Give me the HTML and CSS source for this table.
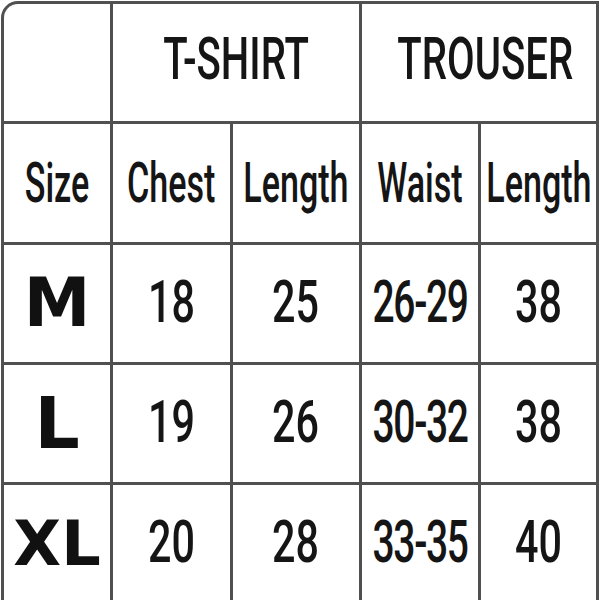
FILE: index.html
```html
<!DOCTYPE html>
<html>
<head>
<meta charset="utf-8">
<link rel="stylesheet" href="styles.css">
</head>
<body>
<div class="chart">
  <div class="cell corner"></div>
  <div class="cell group span2"><span class="t head">T-SHIRT</span></div>
  <div class="cell group span2 shift"><span class="t head">TROUSER</span></div>

  <div class="cell"><span class="t lab">Size</span></div>
  <div class="cell"><span class="t lab">Chest</span></div>
  <div class="cell"><span class="t lab">Length</span></div>
  <div class="cell"><span class="t lab">Waist</span></div>
  <div class="cell"><span class="t lab">Length</span></div>

  <div class="cell"><span class="size m">M</span></div>
  <div class="cell"><span class="t num">18</span></div>
  <div class="cell"><span class="t num">25</span></div>
  <div class="cell"><span class="t num range">26-29</span></div>
  <div class="cell"><span class="t num">38</span></div>

  <div class="cell"><span class="size l">L</span></div>
  <div class="cell"><span class="t num">19</span></div>
  <div class="cell"><span class="t num">26</span></div>
  <div class="cell"><span class="t num range">30-32</span></div>
  <div class="cell"><span class="t num">38</span></div>

  <div class="cell"><span class="size xl">XL</span></div>
  <div class="cell"><span class="t num">20</span></div>
  <div class="cell"><span class="t num">28</span></div>
  <div class="cell"><span class="t num range">33-35</span></div>
  <div class="cell"><span class="t num">40</span></div>
</div>
</body>
</html>
```
FILE: styles.css
```css
html, body {
  margin: 0;
  padding: 0;
  background: #fff;
  overflow: hidden;
  width: 600px;
  height: 600px;
}
.chart {
  margin: 1px 0 0 1px;
  width: 592px;
  padding: 3px 3px 0 3px;
  background: #505050;
  border-top-left-radius: 17px;
  display: grid;
  grid-template-columns: 106px 117px 126px 116px 115px;
  grid-template-rows: 117px 118px 117px 117px 117px;
  gap: 3px;
}
.cell {
  background: #fff;
  display: flex;
  align-items: center;
  justify-content: center;
  overflow: visible;
  color: #151515;
}
.corner {
  border-top-left-radius: 14px;
}
.span2 {
  grid-column: span 2;
}
.shift {
  padding-left: 12px;
}
.t {
  display: inline-block;
  font-family: Roboto, "Liberation Sans", sans-serif;
  font-weight: 500;
  white-space: nowrap;
  transform: scaleX(0.66);
  line-height: 1;
}
.head {
  font-size: 59px;
  transform: scaleX(0.68);
  margin-top: -8px;
}
.lab {
  font-size: 55px;
  transform: scaleX(0.62);
  margin-top: 0;
}
.num {
  font-size: 59px;
  transform: scaleX(0.7);
  margin-top: -4px;
}
.range {
  letter-spacing: -2px;
  transform: scaleX(0.66);
}
.size {
  font-family: "DejaVu Sans", "Liberation Sans", sans-serif;
  font-weight: 700;
  line-height: 1;
  color: #111;
}
.m { font-size: 67px; }
.l { font-size: 71px; }
.xl { font-size: 62px; }
```
